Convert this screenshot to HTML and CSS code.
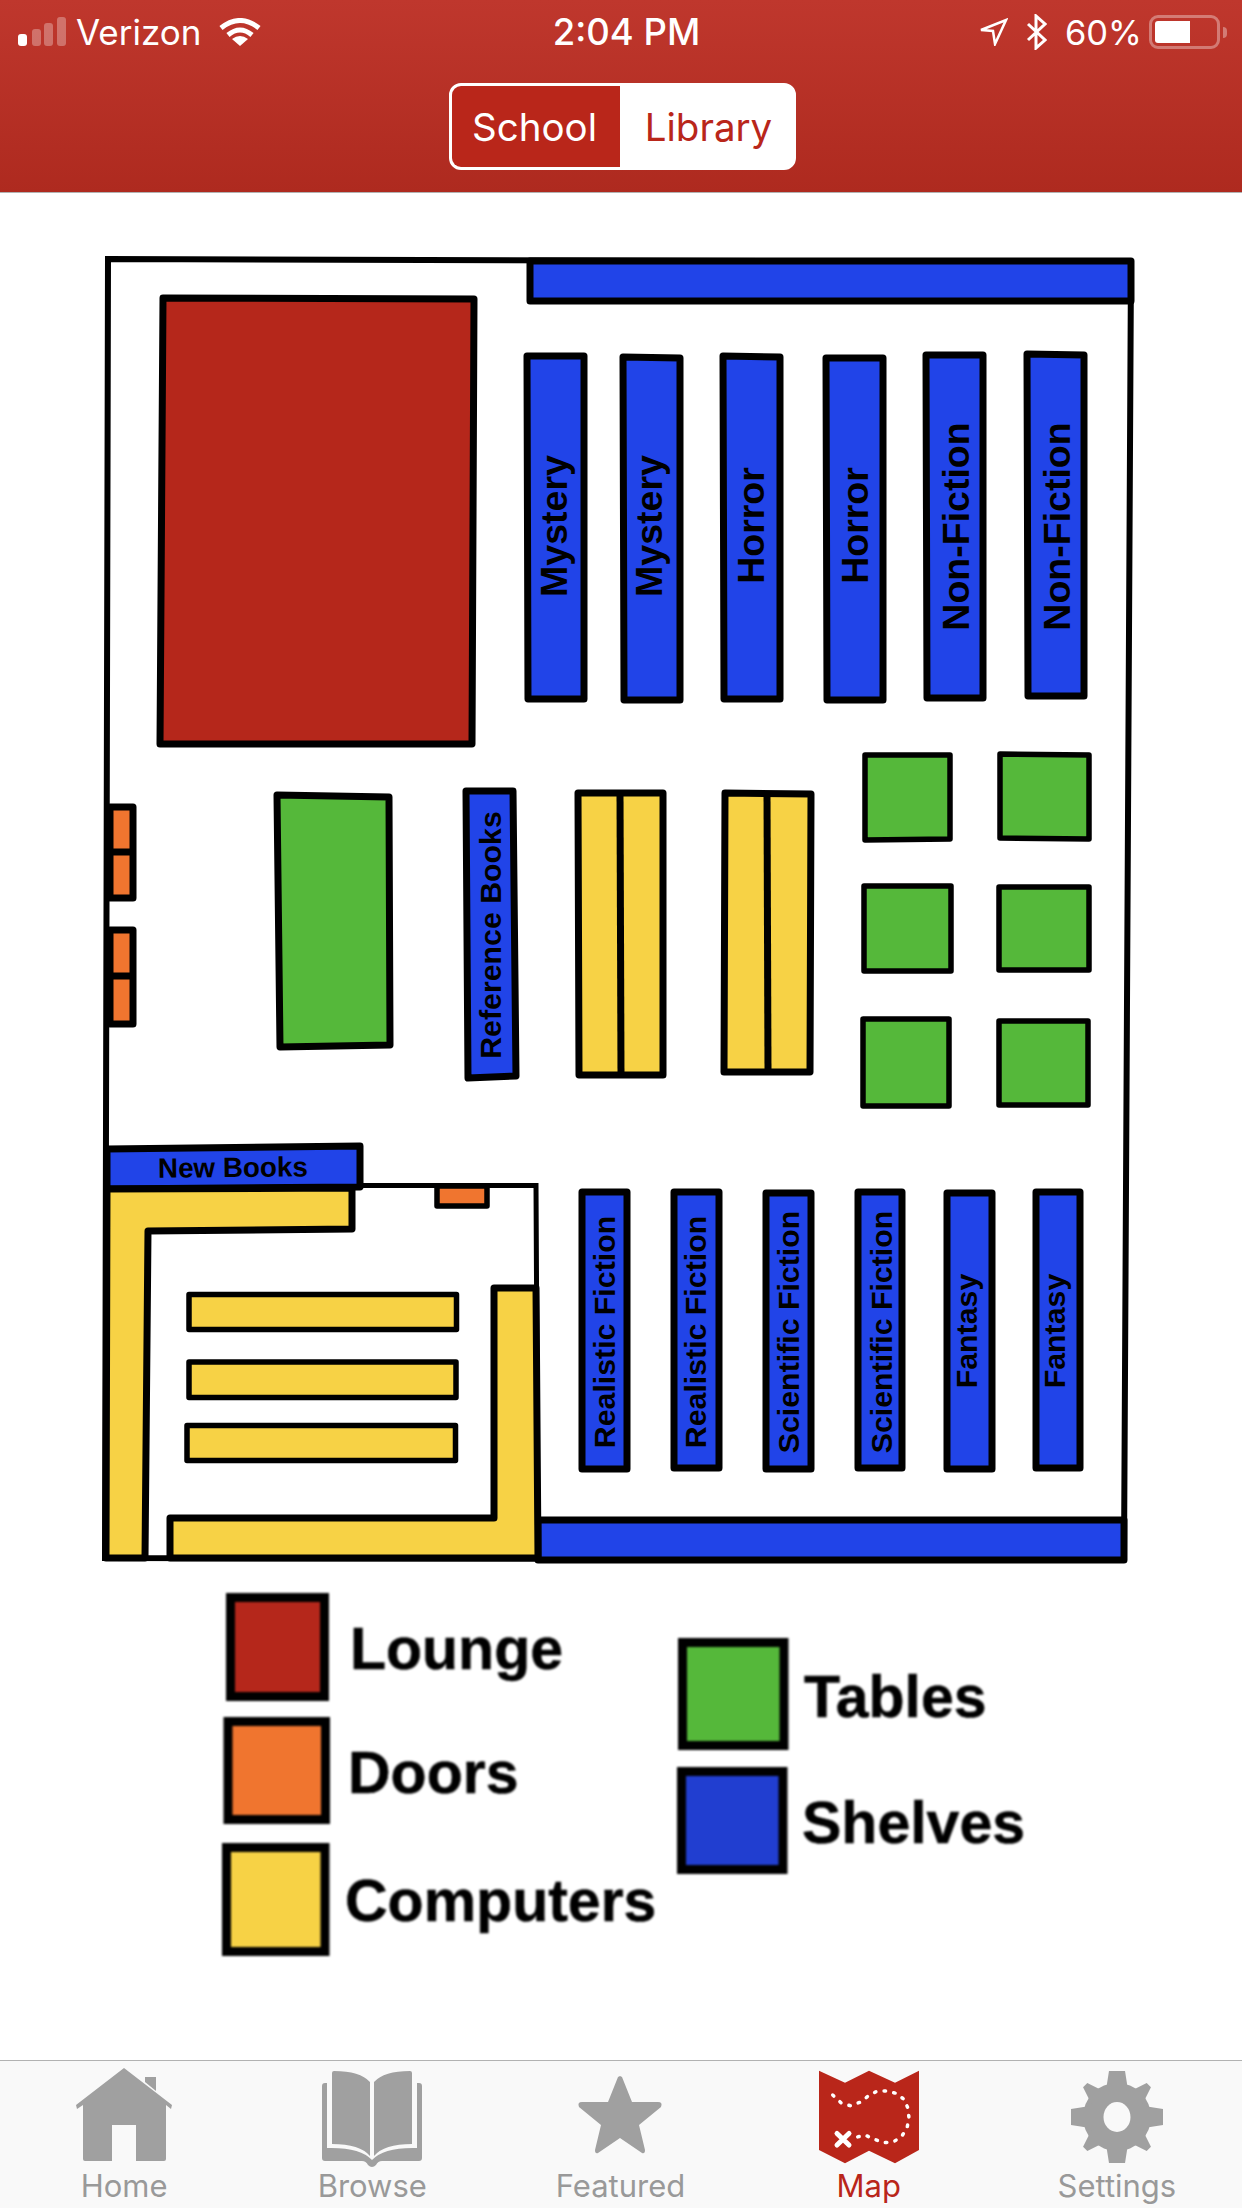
FILE: index.html
```html
<!DOCTYPE html>
<html>
<head>
  <title>Map</title>
  <link rel="stylesheet" href="styles.css">
</head>
<body>
  <header class="top">
    <div class="status">
      <div class="status-left">
        <svg class="signal" viewBox="0 0 48 30">
          <rect class="on" x="0" y="17" width="9" height="12" rx="3"/>
          <rect x="14" y="12" width="9" height="17" rx="3"/>
          <rect x="26" y="6" width="9" height="23" rx="3"/>
          <rect x="39" y="0" width="9" height="29" rx="3"/>
        </svg>
        <span class="carrier">Verizon</span>
        <svg class="wifi" viewBox="0 0 42 28">
          <path class="arc" d="M2 10 Q21 -5 40 10"/>
          <path class="arc" d="M9 17 Q21 7 33 17"/>
          <path class="wedge" d="M21 28 L13 21 Q21 15 29 21 Z"/>
        </svg>
      </div>
      <div class="time">2:04 PM</div>
      <div class="status-right">
        <svg class="arrow" viewBox="0 0 29 28"><polygon points="2,12 27,2 16,26 14,13"/></svg>
        <svg class="bluetooth" viewBox="0 0 21 36"><path d="M2 10 L19 26 L10 34 V2 L19 10 L2 26"/></svg>
        <span class="percent">60%</span>
        <div class="battery"><div class="battery-fill"></div></div>
        <div class="battery-nub"></div>
      </div>
    </div>
    <div class="segment">
      <div class="seg seg-active">School</div>
      <div class="seg seg-plain">Library</div>
    </div>
  </header>

  <main class="content">
    <svg class="plan" viewBox="0 193 1242 1867">
      <!-- walls -->
      <polygon class="wall" points="108,259 1131,262 1124,1559 105,1558"/>
      <polyline class="wall room" points="360,1185.5 536,1185.5 538,1559"/>

      <!-- lounge -->
      <polygon class="piece red" points="163,298 474,299 472,744 160,744"/>

      <!-- long shelves -->
      <polygon class="piece blue" points="530,261 1131,261 1131,301 530,301"/>
      <polygon class="piece blue" points="538,1520 1124,1520 1124,1560 538,1560"/>
      <polygon class="piece blue" points="107,1149 360,1146 360,1187 107,1189"/>

      <!-- upper shelves -->
      <polygon class="piece blue" points="527,356 584,356 584,699 528,699"/>
      <polygon class="piece blue" points="623,357 680,358 680,700 624,700"/>
      <polygon class="piece blue" points="723,356 780,357 780,699 724,699"/>
      <polygon class="piece blue" points="826,358 883,358 883,700 827,700"/>
      <polygon class="piece blue" points="926,355 983,355 983,698 927,698"/>
      <polygon class="piece blue" points="1027,354 1084,355 1084,696 1028,696"/>

      <!-- lower shelves -->
      <polygon class="piece blue" points="582,1192 627,1192 627,1469 582,1469"/>
      <polygon class="piece blue" points="674,1192 719,1192 719,1468 674,1468"/>
      <polygon class="piece blue" points="766,1193 811,1193 811,1469 766,1469"/>
      <polygon class="piece blue" points="858,1192 902,1192 902,1468 858,1468"/>
      <polygon class="piece blue" points="947,1193 992,1193 992,1469 947,1469"/>
      <polygon class="piece blue" points="1036,1192 1080,1192 1080,1468 1036,1468"/>

      <!-- reference shelf and center table -->
      <polygon class="piece blue" points="466,791 513,791 516,1076 468,1078"/>
      <polygon class="piece green" points="277,795 389,797 390,1045 280,1047"/>

      <!-- doors -->
      <polygon class="piece orange" points="110,807 133,807 133,898 110,898"/>
      <line class="piece" x1="110" y1="852" x2="133" y2="852"/>
      <polygon class="piece orange" points="110,930 133,930 133,1024 110,1024"/>
      <line class="piece" x1="110" y1="976" x2="133" y2="976"/>
      <polygon class="piece orange thin" points="437,1186 487,1186 487,1206 437,1206"/>

      <!-- computers -->
      <polygon class="piece yellow" points="578,793 663,793 663,1075 579,1075"/>
      <line class="piece" x1="620" y1="793" x2="621" y2="1075"/>
      <polygon class="piece yellow" points="725,793 811,794 810,1072 724,1072"/>
      <line class="piece" x1="767" y1="793" x2="768" y2="1072"/>
      <polygon class="piece yellow" points="107,1189 352,1188 352,1229 148,1231 145,1558 106,1558"/>
      <polygon class="piece yellow" points="536,1288 494,1288 494,1518 170,1518 170,1558 538,1558"/>
      <polygon class="piece yellow thin" points="189,1294.5 456.5,1294.5 456.5,1329.5 189,1329.5"/>
      <polygon class="piece yellow thin" points="189,1362 456,1362 456,1397.5 189,1397.5"/>
      <polygon class="piece yellow thin" points="187,1425.5 455.5,1425.5 455.5,1460.5 187,1460.5"/>

      <!-- tables -->
      <polygon class="piece green thin" points="865,755 950,755 950,839 865,840"/>
      <polygon class="piece green thin" points="1000,754 1089,755 1089,839 1000,838"/>
      <polygon class="piece green thin" points="864,886 951,886 951,971 864,971"/>
      <polygon class="piece green thin" points="999,887 1089,887 1089,970 999,970"/>
      <polygon class="piece green thin" points="863,1019 949,1019 949,1106 863,1106"/>
      <polygon class="piece green thin" points="999,1021 1088,1021 1088,1105 999,1105"/>

      <!-- shelf names -->
      <text class="name name-lg" transform="translate(567 526) rotate(-90)">Mystery</text>
      <text class="name name-lg" transform="translate(662 526) rotate(-90)">Mystery</text>
      <text class="name name-lg" transform="translate(764 525.5) rotate(-90)">Horror</text>
      <text class="name name-lg" transform="translate(868 525.5) rotate(-90)">Horror</text>
      <text class="name name-lg" transform="translate(968.5 526.5) rotate(-90)">Non-Fiction</text>
      <text class="name name-lg" transform="translate(1069.5 526.5) rotate(-90)">Non-Fiction</text>
      <text class="name name-sm" transform="translate(500.5 935) rotate(-90)">Reference Books</text>
      <text class="name name-sm" transform="translate(614.5 1332) rotate(-90)">Realistic Fiction</text>
      <text class="name name-sm" transform="translate(706 1332) rotate(-90)">Realistic Fiction</text>
      <text class="name name-sm" transform="translate(799 1332) rotate(-90)">Scientific Fiction</text>
      <text class="name name-sm" transform="translate(892 1332) rotate(-90)">Scientific Fiction</text>
      <text class="name name-sm" transform="translate(977 1331) rotate(-90)">Fantasy</text>
      <text class="name name-sm" transform="translate(1065 1331) rotate(-90)">Fantasy</text>
      <text class="name name-new" transform="translate(233 1177) rotate(-0.6)">New Books</text>

      <!-- legend -->
      <g class="legend">
        <rect class="swatch red" x="230.5" y="1597.5" width="94" height="99"/>
        <rect class="swatch orange" x="228" y="1721.5" width="97.5" height="98"/>
        <rect class="swatch yellow" x="226.5" y="1847.5" width="98.5" height="104"/>
        <rect class="swatch green" x="682.5" y="1642.5" width="101.5" height="103"/>
        <rect class="swatch dark-blue" x="681.5" y="1771.5" width="101.5" height="98"/>
        <text class="key" x="350" y="1669">Lounge</text>
        <text class="key" x="348" y="1793">Doors</text>
        <text class="key" x="345" y="1921">Computers</text>
        <text class="key" x="804" y="1717">Tables</text>
        <text class="key" x="802" y="1843">Shelves</text>
      </g>
    </svg>
  </main>

  <nav class="tabs">
    <div class="tab">
      <svg class="tab-icon" viewBox="0 0 100 100">
        <path d="M50 0 L98 37 L97 41 L92 37 V91 Q92 93 90 93 H62 V57 H38 V93 H11 Q9 93 9 91 V37 L3 41 L2 37 Z"/>
        <polygon points="71,9 82,9 82,23 71,14"/>
      </svg>
      <span>Home</span>
    </div>
    <div class="tab">
      <svg class="tab-icon" viewBox="0 0 100 100">
        <path d="M0 18 Q0 15 3 15 H97 Q100 15 100 18 V90 Q100 93 97 93 H60 Q56 93 54 97 Q50 101 46 97 Q44 93 40 93 H3 Q0 93 0 90 Z"/>
        <path class="gap" d="M5 12 V80 Q38 79 50 92 Q62 79 95 80 V12 Z"/>
        <path d="M10 5 Q10 3 12 3 Q38 3 48 14 V88 Q38 76 10 76 Z"/>
        <path d="M90 5 Q90 3 88 3 Q62 3 52 14 V88 Q62 76 90 76 Z"/>
      </svg>
      <span>Browse</span>
    </div>
    <div class="tab">
      <svg class="tab-icon" viewBox="0 0 100 100">
        <path d="M50 8 L52 9 L62 34 H88 Q93 34 91 39 L69 57 L75 82 Q75 86 72 85 L50 70 L28 85 Q25 86 25 82 L31 57 L9 39 Q7 34 12 34 H38 L48 9 Z"/>
      </svg>
      <span>Featured</span>
    </div>
    <div class="tab tab-active">
      <svg class="tab-icon" viewBox="0 0 100 100">
        <polygon points="0,2.7 26,14.7 50,2.7 76,14.7 100,2.7 100,82 76,95.3 50,82.7 26,95.3 0,82"/>
        <polyline class="route" points="13.7,27 22,34.7 31.3,37.7 41,34.3 49.3,28 57.7,23.3 67.3,23 77,25.3 85,31.3 89,40.3 90,50.3 88,60 82.7,68.3 74.7,73.7 64.7,74.7 55.3,71.3 46,67 37,69.3"/>
        <path class="cross" d="M18 65.5 L30 77 M30 65.5 L18 77"/>
      </svg>
      <span>Map</span>
    </div>
    <div class="tab">
      <svg class="tab-icon" viewBox="0 0 100 100">
        <circle cx="50" cy="49" r="34"/>
        <polygon id="tooth" points="39,22 42,3 58,3 61,22"/>
        <polygon id="tip" points="41,22 47,4 53,4 59,22" transform="rotate(45 50 49)"/>
        <use href="#tooth" transform="rotate(90 50 49)"/>
        <use href="#tip" transform="rotate(90 50 49)"/>
        <use href="#tooth" transform="rotate(180 50 49)"/>
        <use href="#tip" transform="rotate(180 50 49)"/>
        <use href="#tooth" transform="rotate(270 50 49)"/>
        <use href="#tip" transform="rotate(270 50 49)"/>
        <ellipse class="gap" cx="50" cy="49" rx="13.5" ry="15"/>
      </svg>
      <span>Settings</span>
    </div>
  </nav>
</body>
</html>
```

FILE: styles.css
```css
body {
  font-family: Inter, "Liberation Sans", sans-serif;
  margin: 0;
  padding: 0;
  width: 1242px;
  height: 2208px;
  display: flex;
  flex-direction: column;
  background-color: #fff;
  overflow: hidden;
}

/* red top bar */
.top {
  height: 192px;
  flex: none;
  background: linear-gradient(#bf372d, #ae2a1f);
  border-bottom: 1px solid #b2b2b2;
  color: #fff;
}

.status {
  height: 64px;
  padding: 0 15px 0 18px;
  display: grid;
  grid-template-columns: 1fr auto 1fr;
  align-items: center;
  font-size: 35px;
}

.status-left, .status-right {
  display: flex;
  align-items: center;
}

.status-right {
  justify-content: flex-end;
}

.signal {
  width: 48px;
  height: 30px;
  margin-right: 10px;
}

.signal rect {
  fill: rgba(255,255,255,0.3);
}

.signal .on {
  fill: #fff;
}

.wifi {
  width: 42px;
  height: 28px;
  margin-left: 18px;
}

.wifi .arc {
  fill: none;
  stroke: #fff;
  stroke-width: 5;
}

.wifi .wedge {
  fill: #fff;
}

.time {
  font-size: 36.5px;
  font-weight: 500;
  margin-left: 8px;
}

.arrow {
  width: 29px;
  height: 28px;
  margin-right: 18px;
}

.arrow polygon {
  fill: none;
  stroke: #fff;
  stroke-width: 2.5;
}

.bluetooth {
  width: 21px;
  height: 36px;
  margin-right: 18px;
}

.bluetooth path {
  fill: none;
  stroke: #fff;
  stroke-width: 3;
}

.percent {
  font-size: 34.5px;
  margin-right: 7px;
}

.battery {
  width: 71px;
  height: 34px;
  box-sizing: border-box;
  padding: 3px;
  border: 3px solid rgba(255,255,255,0.35);
  border-radius: 9px;
}

.battery-fill {
  width: 35px;
  height: 22px;
  background-color: #fff;
  border-radius: 3px 0 0 3px;
}

.battery-nub {
  width: 4px;
  height: 11px;
  margin-left: 3px;
  background-color: rgba(255,255,255,0.35);
  border-radius: 0 4px 4px 0;
}

/* School / Library switch */
.segment {
  width: 347px;
  height: 87px;
  box-sizing: border-box;
  margin: 19px 0 0 449px;
  display: flex;
  background-color: #fff;
  border: 3px solid #fff;
  border-radius: 12px;
  overflow: hidden;
  font-size: 38.5px;
  color: #b9261a;
}

.seg {
  flex: 1;
  display: flex;
  align-items: center;
  justify-content: center;
}

.seg-active {
  flex: none;
  width: 168px;
  box-sizing: border-box;
  padding-right: 3px;
  background-color: #b9261a;
  color: #fff;
}

.seg-plain {
  padding-left: 4px;
}

/* floor plan */
.content {
  flex: 1;
  min-height: 0;
}

.plan {
  display: block;
  width: 1242px;
  height: 1867px;
}

.wall {
  fill: none;
  stroke: #000;
  stroke-width: 6;
}

.room {
  stroke-width: 5;
}

.piece {
  stroke: #000;
  stroke-width: 7;
  stroke-linejoin: round;
}

.thin {
  stroke-width: 5.5;
}

.red { fill: #b5271b; }
.blue { fill: #2144e8; }
.dark-blue { fill: #213ed0; }
.green { fill: #55b83a; }
.yellow { fill: #f7d245; }
.orange { fill: #f0752f; }

.name {
  font-family: "Liberation Sans", Arial, sans-serif;
  font-weight: bold;
  text-anchor: middle;
  fill: #000;
}

.name-lg {
  font-size: 37.5px;
}

.name-sm {
  font-size: 30.3px;
}

.name-new {
  font-size: 27.8px;
}

.legend {
  filter: blur(0.8px);
}

.swatch {
  stroke: #000;
  stroke-width: 9;
}

.key {
  font-family: "Liberation Sans", Arial, sans-serif;
  font-weight: bold;
  font-size: 59px;
  fill: #000;
  stroke: #000;
  stroke-width: 0.5;
}

/* bottom tabs */
.tabs {
  height: 148px;
  flex: none;
  box-sizing: border-box;
  padding: 7px 1px 0 0;
  display: grid;
  grid-template-columns: repeat(5, 1fr);
  background-color: #f9f9f9;
  border-top: 1px solid #b2b2b2;
  font-size: 31px;
  color: #999;
}

.tab {
  display: flex;
  flex-direction: column;
  align-items: center;
  line-height: 36px;
}

.tab-icon {
  width: 100px;
  height: 100px;
  fill: #a0a0a0;
}

.tab-active {
  color: #b9261a;
}

.tab-active .tab-icon {
  fill: #b9261a;
}

.gap {
  fill: #f9f9f9;
}

.route {
  fill: none;
  stroke: #fff;
  stroke-width: 3.5;
  stroke-linecap: round;
  stroke-dasharray: 1.5 8.3;
}

.cross {
  fill: none;
  stroke: #fff;
  stroke-width: 5;
  stroke-linecap: round;
}
```
